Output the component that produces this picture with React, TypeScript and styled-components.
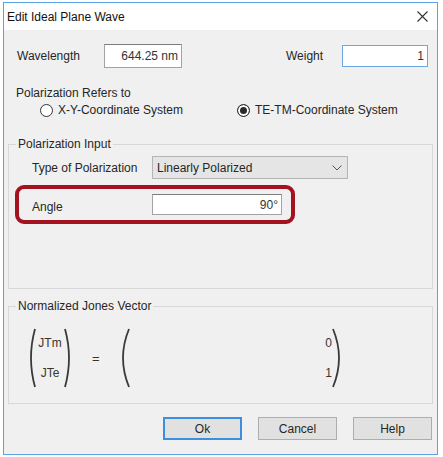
import React from "react";
import styled, { createGlobalStyle } from "styled-components";

const GlobalStyle = createGlobalStyle`
  body {
    margin: 0;
    background: #ffffff;
    font-family: "Liberation Sans", Arial, sans-serif;
    font-size: 12px;
    color: #262626;
  }
`;

const Window = styled.div`
  margin: 2px 0 0 3px;
  width: 435px;
  height: 453px;
  box-sizing: border-box;
  border: 1px solid #5aa2e6;
  background: #f0f0f0;
  display: flex;
  flex-direction: column;
`;

const TitleBar = styled.div`
  height: 27px;
  background: #ffffff;
  display: flex;
  align-items: center;
  justify-content: space-between;
  padding: 0 9px 0 3px;
  color: #111;
`;

const Body = styled.div`
  display: flex;
  flex-direction: column;
  padding: 0 4px;
`;

const TopRow = styled.div`
  display: flex;
  align-items: center;
  margin-top: 14px;
  padding: 0 5px 0 9px;
`;

const Label = styled.span<{ $w?: number; $drop?: number }>`
  width: ${(p) => (p.$w ? `${p.$w}px` : "auto")};
  flex-shrink: 0;
  line-height: 14px;
  margin-top: ${(p) => p.$drop ?? 0}px;
`;

const Field = styled.div<{ $w: number; $h: number; $focus?: boolean }>`
  width: ${(p) => p.$w}px;
  height: ${(p) => p.$h}px;
  box-sizing: border-box;
  background: #ffffff;
  border: 1px solid ${(p) => (p.$focus ? "#6aa8e4" : "#a3a3a3")};
  border-top-color: ${(p) => (p.$focus ? "#6aa8e4" : "#7c7c7c")};
  display: flex;
  align-items: center;
  justify-content: flex-end;
  padding-right: 3px;
  color: #333;
`;

const Spacer = styled.div`
  flex: 1;
`;

const Caption = styled.div`
  margin-top: 18px;
  padding-left: 8px;
  line-height: 14px;
`;

const RadioRow = styled.div`
  display: flex;
  margin-top: 3px;
  padding-left: 32px;
  height: 14px;
`;

const RadioItem = styled.label<{ $w?: number }>`
  display: flex;
  align-items: center;
  gap: 5px;
  width: ${(p) => (p.$w ? `${p.$w}px` : "auto")};
  line-height: 14px;
`;

const RadioDot = styled.span<{ $on?: boolean }>`
  width: 13px;
  height: 13px;
  box-sizing: border-box;
  border-radius: 50%;
  border: 1px solid #333;
  background: ${(p) => (p.$on ? "#2a2a2a" : "#fff")};
  box-shadow: inset 0 0 0 2px #fff;
`;

const Group = styled.fieldset<{ $mt: number; $pb: number }>`
  margin: ${(p) => p.$mt}px 0 0 0;
  padding: 0 0 ${(p) => p.$pb}px 0;
  border: 1px solid #d8d8d8;
  min-inline-size: 0;
`;

const Legend = styled.legend`
  margin-left: 7px;
  padding: 0 2px;
  line-height: 14px;
`;

const TypeRow = styled.div`
  display: flex;
  align-items: center;
  margin-top: 5px;
  padding-left: 23px;
`;

const Select = styled.div`
  width: 196px;
  height: 23px;
  box-sizing: border-box;
  background: #e5e5e5;
  border: 1px solid #b4b4b4;
  display: flex;
  align-items: center;
  justify-content: space-between;
  padding: 0 5px 0 4px;
`;

const Highlight = styled.div`
  margin: 6px 0 0 6px;
  width: 280px;
  box-sizing: border-box;
  border: 4px solid #a5121f;
  border-radius: 9px;
  padding: 5px 9px 5px 13px;
  display: flex;
  align-items: center;
`;

const JonesRow = styled.div`
  display: flex;
  align-items: center;
  margin-top: 15px;
  padding-left: 19px;
  height: 60px;
`;

const VectorCol = styled.div<{ $w: number; $align: string }>`
  width: ${(p) => p.$w}px;
  height: 44px;
  display: flex;
  flex-direction: column;
  justify-content: space-between;
  align-items: ${(p) => p.$align};
  line-height: 14px;
  font-size: 12px;
  color: #3a3530;
`;

const Equals = styled.span`
  width: 26px;
  margin-left: 20px;
  font-size: 13px;
  color: #333;
`;

const ButtonRow = styled.div`
  display: flex;
  justify-content: flex-end;
  gap: 16px;
  margin-top: 13px;
  padding-right: 1px;
`;

const Button = styled.button<{ $primary?: boolean }>`
  width: 79px;
  height: 23px;
  box-sizing: border-box;
  background: #e1e1e1;
  border: ${(p) => (p.$primary ? "2px solid #3c8fdc" : "1px solid #adadad")};
  font-family: inherit;
  font-size: 12px;
  color: #262626;
  padding: 0;
`;

const Paren = ({ side, w = 8 }: { side: "l" | "r"; w?: number }) => {
  const d =
    side === "l"
      ? `M${w - 1} 1 Q-1 30 ${w - 1} 59`
      : `M1 1 Q${w + 1} 30 1 59`;
  return (
    <svg width={w} height={60} viewBox={`0 0 ${w} 60`}>
      <path d={d} fill="none" stroke="#3a3a3a" strokeWidth={1.8} />
    </svg>
  );
};

const App = () => {
  return (
    <>
      <GlobalStyle />
      <Window>
        <TitleBar>
          <span>Edit Ideal Plane Wave</span>
          <svg width="11" height="11" viewBox="0 0 11 11">
            <path d="M0.5 0.5 L10.5 10.5 M10.5 0.5 L0.5 10.5" stroke="#333" strokeWidth={1.1} />
          </svg>
        </TitleBar>
        <Body>
          <TopRow>
            <Label $w={87}>Wavelength</Label>
            <Field $w={78} $h={24}>644.25 nm</Field>
            <Spacer />
            <Label $w={56}>Weight</Label>
            <Field $w={86} $h={22} $focus>1</Field>
          </TopRow>

          <Caption>Polarization Refers to</Caption>
          <RadioRow>
            <RadioItem $w={197}>
              <RadioDot />
              X-Y-Coordinate System
            </RadioItem>
            <RadioItem>
              <RadioDot $on />
              TE-TM-Coordinate System
            </RadioItem>
          </RadioRow>

          <Group $mt={20} $pb={64}>
            <Legend>Polarization Input</Legend>
            <TypeRow>
              <Label $w={120}>Type of Polarization</Label>
              <Select>
                <span>Linearly Polarized</span>
                <svg width="10" height="6" viewBox="0 0 10 6">
                  <path d="M0.5 0.5 L5 5 L9.5 0.5" fill="none" stroke="#555" strokeWidth={1} />
                </svg>
              </Select>
            </TypeRow>
            <Highlight>
              <Label $w={120} $drop={4}>Angle</Label>
              <Field $w={130} $h={21}>90°</Field>
            </Highlight>
          </Group>

          <Group $mt={10} $pb={15}>
            <Legend>Normalized Jones Vector</Legend>
            <JonesRow>
              <Paren side="l" />
              <VectorCol $w={28} $align="center">
                <span>JTm</span>
                <span>JTe</span>
              </VectorCol>
              <Paren side="r" />
              <Equals>=</Equals>
              <Paren side="l" w={12} />
              <VectorCol $w={202} $align="flex-end">
                <span>0</span>
                <span>1</span>
              </VectorCol>
              <Paren side="r" w={12} />
            </JonesRow>
          </Group>

          <ButtonRow>
            <Button $primary>Ok</Button>
            <Button>Cancel</Button>
            <Button>Help</Button>
          </ButtonRow>
        </Body>
      </Window>
    </>
  );
};

export default App;
